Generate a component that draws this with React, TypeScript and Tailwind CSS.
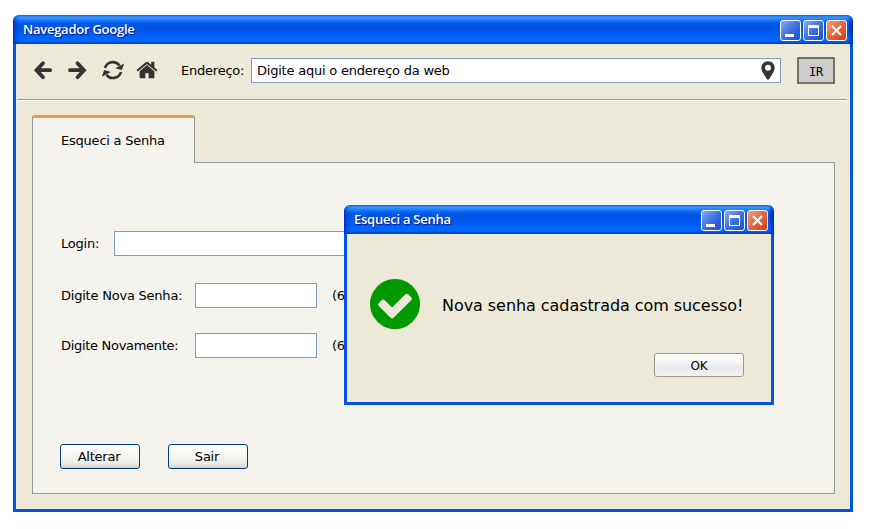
import React from "react";

const XP_TITLE =
  "bg-[linear-gradient(to_bottom,#0058e6_0px,#3a93ff_2px,#2887fb_4px,#0a64f0_7px,#0055e5_10px,#0055e5_14px,#005cf5_19px,#0069ff_24px,#0066fb_26px,#0046d5_28px,#0040c8_29px)]";

function Controls() {
  const base = "w-[21px] h-[21px] rounded-[3px] border border-white";
  return (
    <div className="flex gap-[2px]">
      <div className={base + " bg-[linear-gradient(135deg,#8cacf5,#3f6fe0_50%,#1c4fd0)]"}>
        <svg className="block" width="19" height="19"><rect x="4" y="13" width="9" height="3" fill="#fff" /></svg>
      </div>
      <div className={base + " bg-[linear-gradient(135deg,#8cacf5,#3f6fe0_50%,#1c4fd0)]"}>
        <svg className="block" width="19" height="19">
          <path d="M4 4h11v11H4zM5 7v7h9V7z" fill="#fff" fillRule="evenodd" />
        </svg>
      </div>
      <div className={base + " bg-[linear-gradient(135deg,#f0a08c,#e46442_50%,#d83c0c)]"}>
        <svg className="block" width="19" height="19"><path d="M5 5l9 9M14 5l-9 9" stroke="#fff" strokeWidth="2.2" /></svg>
      </div>
    </div>
  );
}

function TitleBar({ title }: { title: string }) {
  return (
    <div className={"relative flex h-[29px] shrink-0 items-center justify-between rounded-t-[6px] pl-[10px] pr-[6px] " + XP_TITLE}>
      <div className="pointer-events-none absolute inset-0 rounded-t-[6px] bg-[linear-gradient(to_right,rgba(0,30,170,.75)_0px,rgba(0,50,200,.3)_3px,transparent_7px,transparent_calc(100%-6px),rgba(0,30,170,.75)_100%)]" />
      <span className="relative whitespace-nowrap font-['Open_Sans',sans-serif] text-[13px] font-semibold leading-[29px] tracking-[-0.25px] text-white [text-shadow:1px_1px_1px_#0a1883]">{title}</span>
      <div className="relative pt-[2px]"><Controls /></div>
    </div>
  );
}

function Field({ className }: { className: string }) {
  return <input readOnly className={"h-[25px] shrink-0 border border-[#7f9db9] bg-white outline-none " + className} />;
}

function Button({ children }: { children: React.ReactNode }) {
  return (
    <button className="h-[25px] w-20 rounded-[3px] border border-[#003c74] bg-[linear-gradient(to_bottom,#fff,#f3f3ef_55%,#ecebe6_80%,#d6d0c5)] pr-[2px] pt-px">
      {children}
    </button>
  );
}

export default function App() {
  return (
    <div className="relative h-[529px] w-[870px] overflow-hidden bg-white pl-[13px] pt-[15px] font-['DejaVu_Sans',Verdana,sans-serif] text-[13px] leading-4 tracking-[-0.22px] text-black">
      <div className="flex h-[497px] w-[840px] flex-col">
        <TitleBar title="Navegador Google" />
        <div className="flex-1 border-x-[3px] border-b-[3px] border-[#0055e5] bg-[#ece9d8]">
          <div className="ml-px mr-[3px] flex h-[57px] items-start border-b border-white pt-[13px] shadow-[inset_0_-1px_0_#9d9d92]">
            <div className="flex h-[26px] w-[164px] items-center pl-[16px] text-[#333]">
              <svg width="130" height="26" viewBox="33 57 130 26" className="shrink-0">
                <g fill="none" stroke="#333" strokeWidth="3.8" strokeLinecap="round">
                  <path d="M43 63.200L36.500 70.200L43 77.200M37.500 70.200H50.200" />
                  <path d="M77.500 63.200L84 70.200L77.500 77.200M83 70.200H70" />
                </g>
                <path d="M105 68A8.200 8.200 0 0 1 119.500 65.500M121 72A8.200 8.200 0 0 1 106.500 74.700" fill="none" stroke="#333" strokeWidth="2.6" />
                <path d="M124.200 63.500L121.800 70L115.200 68.200zM101.800 76.700L104.200 70L110.800 72z" fill="#333" />
                <svg x="135.500" y="58.500" width="23" height="23" viewBox="0 0 1792 1792">
                  <path fill="#333" d="M1472 992v480q0 26-19 45t-45 19h-384v-384h-256v384h-384q-26 0-45-19t-19-45v-480q0-1 .5-3t.5-3l575-474 575 474q1 2 1 6zm223-69l-62 74q-8 9-21 11h-3q-13 0-21-7l-692-577-692 577q-12 8-24 7-13-2-21-11l-62-74q-8-10-7-23.500t11-21.500l719-599q32-26 76-26t76 26l244 204v-195q0-14 9-23t23-9h192q14 0 23 9t9 23v408l219 182q10 8 11 21.500t-7 23.500z" />
                </svg>
              </svg>
            </div>
            <span className="mt-[6px] w-[70px] shrink-0 whitespace-nowrap">Endereço:</span>
            <div className="mt-px flex h-[25px] w-[530px] shrink-0 items-center justify-between border border-[#7f9db9] bg-white pl-[5px] pr-[5px]">
              <span className="pt-px">Digite aqui o endereço da web</span>
              <svg width="14" height="19" viewBox="0 0 14 19">
                <path fill="#333" fillRule="evenodd" d="M7 .2C3.200.2.300 3 .300 6.700C.300 10.300 3.500 14 5.700 18Q7 19.600 8.300 18C10.500 14 13.700 10.300 13.700 6.700C13.700 3 10.800.2 7 .2zM7 3.700a3 3 0 1 1 0 6a3 3 0 1 1 0-6z" />
              </svg>
            </div>
            <button className="ml-4 h-[27px] w-[38px] shrink-0 border-2 border-[#73736d] bg-[#ccc] pt-[2px] font-['DejaVu_Sans_Mono',monospace] text-xs">IR</button>
          </div>
          <div className="ml-4 mt-[14px] w-[803px]">
            <div className="relative z-10 h-[48px] w-[163px] overflow-hidden rounded-t-[3px] border-x border-[#919b9c] bg-[#f4f3ee] pl-[28px] pt-[18px]">
              <div className="absolute -inset-x-px top-0 h-[3px] bg-[#ee9a35]" />
              Esqueci a Senha
            </div>
            <div className="-mt-px h-[332px] border border-[#919b9c] bg-[#f4f3ee] pl-[27px] pt-[68px]">
              <div className="flex h-[25px] items-center"><span className="w-[54px] pl-px">Login:</span><Field className="w-[400px]" /></div>
              <div className="mt-[27px] flex h-[25px] items-center"><span className="w-[135px] pl-px">Digite Nova Senha:</span><Field className="w-[122px]" /><span className="ml-[15px]">(6</span></div>
              <div className="mt-[25px] flex h-[25px] items-center"><span className="w-[135px] pl-px tracking-[-0.3px]">Digite Novamente:</span><Field className="w-[122px]" /><span className="ml-[15px]">(6</span></div>
              <div className="mt-[86px] flex gap-7"><Button>Alterar</Button><Button>Sair</Button></div>
            </div>
          </div>
        </div>
      </div>

      <div className="absolute left-[344px] top-[205px] z-20 flex h-[200px] w-[430px] flex-col">
        <TitleBar title="Esqueci a Senha" />
        <div className="flex-1 border-x-[3px] border-b-[3px] border-[#0055e5] bg-[#ece9d8]">
          <div className="ml-[23px] mt-[45px] flex h-[50px] items-center">
            <svg width="50" height="50" viewBox="128 128 1536 1536" className="shrink-0">
              <path fill="#009a00" d="M1412 734q0-28-18-46l-91-90q-19-19-45-19t-45 19l-408 407-226-226q-19-19-45-19t-45 19l-91 90q-18 18-18 46 0 27 18 45l362 362q19 19 45 19 27 0 46-19l543-543q18-18 18-45zm252 162q0 209-103 385.500t-279.500 279.500-385.500 103-385.500-103-279.500-279.500-103-385.500 103-385.500 279.500-279.500 385.500-103 385.500 103 279.500 279.500 103 385.500z" />
            </svg>
            <span className="ml-[22px] whitespace-nowrap pt-[4px] text-base tracking-[-0.06px]">Nova senha cadastrada com sucesso!</span>
          </div>
          <div className="mr-[27px] mt-6 flex justify-end">
            <button className="h-[24px] w-[90px] rounded-[3px] border border-[#a09788] bg-[linear-gradient(to_bottom,#fdfdfd,#f3f3f3_45%,#e8e8e8_55%,#f2f2f2)] pt-px text-xs">OK</button>
          </div>
        </div>
      </div>
    </div>
  );
}
